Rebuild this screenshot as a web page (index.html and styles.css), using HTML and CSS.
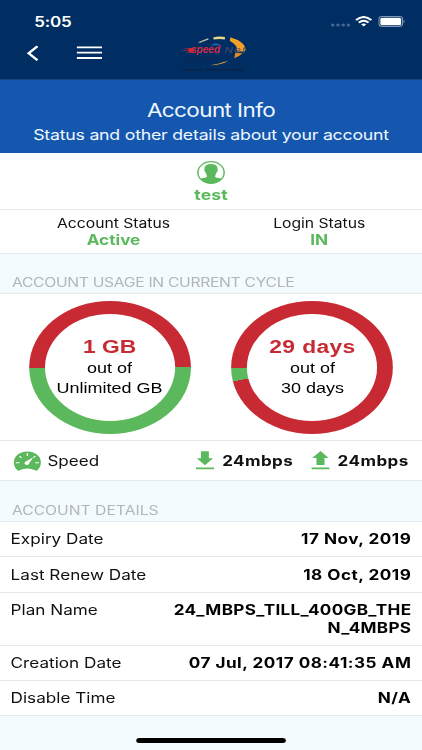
FILE: index.html
```html
<!DOCTYPE html>
<html lang="en">
<head>
<meta charset="utf-8">
<title>Account Info</title>
<link rel="stylesheet" href="styles.css">
</head>
<body>
<div class="screen">
  <header class="top">
    <div class="statusbar">
      <span class="time">5:05</span>
      <span class="signals">
        <svg width="16" height="4" viewBox="0 0 16 4" fill="#466791"><circle cx="1.6" cy="2" r="1.5"/><circle cx="5.9" cy="2" r="1.5"/><circle cx="10.2" cy="2" r="1.5"/><circle cx="14.5" cy="2" r="1.5"/></svg>
        <svg class="wifi" width="14" height="11" viewBox="0 0 14 11" fill="none" stroke="#fff" stroke-width="2"><path d="M.7 4.1Q7-2 13.3 4.1"/><path d="M3 6.6Q7 2.8 11 6.6"/><path d="M7 10.5 4.9 8.3Q7 6.5 9.1 8.3Z" fill="#fff" stroke="none"/></svg>
        <svg class="battery" width="23" height="11" viewBox="0 0 23 11"><rect x=".5" y=".5" width="19.5" height="9.9" rx="2.6" fill="none" stroke="#7e96b4"/><rect x="1.7" y="1.7" width="17.1" height="7.5" rx="1.5" fill="#fff"/><path d="M21 3.8q1.5 1.7 0 3.4z" fill="#9bafc7"/></svg>
      </span>
    </div>
    <nav class="nav">
      <svg class="back" width="10" height="17" viewBox="0 0 10 17" fill="none" stroke="#fff" stroke-width="2.2"><path d="M8.8 1.2 1.6 8.2 8.8 15.2"/></svg>
      <svg class="menu" width="21" height="14" viewBox="0 0 21 14" fill="none" stroke="#fff" stroke-width="1.8"><path d="M0 1.4H21M0 6.7H21M0 12H21"/></svg>
      <svg class="logo" width="56" height="40" viewBox="0 0 56 40">
        <path d="M12.7 6.2 21 2.2 21.6 3.4 14.5 6.8z" fill="#bcc69b"/>
        <path d="M25.3 1.4Q30 -.1 35 1L34.8 3.4Q30 2.4 25.6 3.6z" fill="#e8d98a"/>
        <path d="M39.3 1.2Q51 5.5 51.9 12.5Q52 14.5 51 15.5L45 15.5Q45.5 9 39 5z" fill="#f3a027"/>
        <path d="M43.5 17 49.5 17.3Q47.5 19.8 42.5 22.3z" fill="#e78b25"/>
        <path d="M37.5 25Q32.5 29 22.5 29.3Q31 27.8 33 26.2z" fill="#f0a735"/>
        <path d="M23.5 9.5q4-4.5 8 0z" fill="#1766a6"/>
        <path d="M1.5 12.5h9M0 14.5h9M3 16.5h7" stroke="#a82b43" stroke-width=".8" opacity=".7"/>
        <circle cx="7" cy="14" r="2.3" fill="#d92430"/>
        <text class="logo-speed" x="7" y="17" textLength="24" lengthAdjust="spacingAndGlyphs">speed</text>
        <text class="logo-net" x="34.5" y="17">Net</text>
        <path d="M3 21.5H29" stroke="#14274b" stroke-width="1.2" stroke-dasharray="3 .5"/>
        <path d="M2 24H27" stroke="#06284f" stroke-width="1"/>
        <text class="logo-tag" x=".5" y="34.8" textLength="50" lengthAdjust="spacingAndGlyphs">Connects • Forever • Reliable</text>
      </svg>
    </nav>
  </header>

  <section class="hero">
    <h1>Account Info</h1>
    <p>Status and other details about your account</p>
  </section>

  <section class="user">
    <svg width="23" height="23" viewBox="0 0 23 23"><circle cx="11.5" cy="11.5" r="10.8" fill="none" stroke="#5cb85c" stroke-width="1.2"/><path d="M11.5 3Q17 3 16.9 8Q17.3 8.7 16.8 10.1Q16.5 11.3 15.9 11.7L15 14.4Q14.3 16.3 16.7 16.8Q19.4 17.2 20.3 18Q17 22.2 11.5 22.2Q6 22.2 2.7 18Q3.6 17.2 6.3 16.8Q8.7 16.3 8 14.4L7.1 11.7Q6.5 11.3 6.2 10.1Q5.7 8.7 6.1 8Q6 3 11.5 3Z" fill="#5cb85c"/></svg>
    <strong>test</strong>
  </section>

  <section class="states">
    <div><span>Account Status</span><strong>Active</strong></div>
    <div><span>Login Status</span><strong>IN</strong></div>
  </section>

  <h2 class="usage-title">ACCOUNT USAGE IN CURRENT CYCLE</h2>
  <section class="rings">
    <div class="ring half"><div class="ring-text"><strong>1 GB</strong><span>out of</span><span>Unlimited GB</span></div></div>
    <div class="ring month"><div class="ring-text"><strong class="days">29 days</strong><span>out of</span><span>30 days</span></div></div>
  </section>
  <section class="speed">
    <svg class="gauge" width="23" height="20" viewBox="0 0 23 20"><path d="M11.5.4A11 11 0 0 1 22.6 11.4Q22.6 16 19.5 19.6Q19 20 18.3 19.5Q11.5 15.6 4.7 19.5Q4 20 3.5 19.6Q.4 16 .4 11.4A11 11 0 0 1 11.5.4Z" fill="#5cb85c"/><path d="M11.5 2.2V5.1M5 5 6.8 7M18 5 16.5 6.7M2 11.7H5M18 11.7H21" stroke="#fff" stroke-width="1.1"/><path d="M16.2 6.6 12.9 12.4A1.9 1.9 0 1 1 10.5 10.2Z" fill="#fff"/></svg>
    <span class="speed-label">Speed</span>
    <svg class="down" width="15" height="19" viewBox="0 0 15 19" fill="#5cb85c"><path d="M4.2.2H10.7V7.2H14.2L7.5 14.2.8 7.2H4.2zM0 16.4H15V18.3H0z"/></svg>
    <strong>24mbps</strong>
    <svg class="up" width="15" height="19" viewBox="0 0 15 19" fill="#5cb85c"><path d="M7.5 0 14.2 7H10.8V14H4.2V7H.8zM0 16.4H15V18.3H0z"/></svg>
    <strong>24mbps</strong>
  </section>

  <h2 class="details-title">ACCOUNT DETAILS</h2>
  <dl class="details">
    <div><dt>Expiry Date</dt><dd>17 Nov, 2019</dd></div>
    <div><dt>Last Renew Date</dt><dd>18 Oct, 2019</dd></div>
    <div class="plan"><dt>Plan Name</dt><dd>24_MBPS_TILL_400GB_THE<br>N_4MBPS</dd></div>
    <div><dt>Creation Date</dt><dd>07 Jul, 2017 08:41:35 AM</dd></div>
    <div><dt>Disable Time</dt><dd>N/A</dd></div>
  </dl>
  <div class="home"></div>
</div>
</body>
</html>
```
FILE: styles.css
```css
* { box-sizing: border-box; }
html, body { margin: 0; width: 422px; height: 750px; overflow: hidden; }
body { font-family: Inter, "Liberation Sans", sans-serif; background: #f3fbff; color: #111; }
/* The whole screen is wider than its natural proportions. */
.screen { width: 347px; height: 750px; transform: scaleX(1.2163); transform-origin: 0 0; display: flex; flex-direction: column; }
svg { display: block; flex: none; }
h1, h2, p, dl, dd, dt { margin: 0; font-weight: 400; }
.top { height: 80px; background: #002d62; border-bottom: 1px solid #174580; flex: none; }
.statusbar { height: 32px; padding: 12px 12.8px 0 28.2px; display: flex; justify-content: space-between; color: #fff; }
.time { font-size: 14px; line-height: 19px; font-weight: 600; letter-spacing: -.2px; }
.signals { display: flex; padding-top: 4px; }
.signals svg:first-child { margin-top: 7px; }
.wifi { margin-left: 4.5px; }
.battery { margin-left: 5px; }
.nav { height: 47px; display: flex; padding-left: 22px; }
.back { margin-top: 13px; }
.menu { margin: 14px 0 0 31.3px; }
.logo { margin: 4px 0 0 66px; overflow: visible; }
.logo-speed { font: italic 700 10px "Liberation Sans", sans-serif; fill: #d52a43; }
.logo-net { font: italic 400 9.5px "Liberation Sans", sans-serif; fill: #4b526e; letter-spacing: 1.2px; }
.logo-tag { font: 700 3.6px "Liberation Sans", sans-serif; fill: #111e3a; }
.hero { height: 73px; flex: none; padding-top: 18px; background: #1557ae; color: #eef8ff; text-align: center; }
.hero h1 { font-size: 18.5px; line-height: 24px; letter-spacing: -.5px; }
.hero p { font-size: 14.6px; line-height: 20px; margin-top: 3px; letter-spacing: -.2px; }
.user { height: 57px; flex: none; background: #fff; border-bottom: 1px solid #e6e9ec; display: flex; flex-direction: column; align-items: center; padding-top: 8px; color: #5cb85c; }
.user strong { font-size: 14.6px; line-height: 18px; margin-top: 2px; }
.states { height: 44px; flex: none; display: grid; grid-template-columns: 1fr 1fr; padding: 4.5px 0 0 8.8px; background: #fff; border-bottom: 1px solid #e6e9ec; text-align: center; }
.states div { display: flex; flex-direction: column; }
.states span { font-size: 12.9px; line-height: 17px; }
.states strong { font-size: 14.1px; line-height: 17px; margin-top: -1px; color: #5cb85c; }
h2 { flex: none; padding-left: 9.8px; border-bottom: 1px solid #e6e9ec; font-size: 12.9px; color: #b0b6ba; line-height: 18px; }
.usage-title { height: 40px; padding-top: 20px; letter-spacing: -.25px; }
.rings { height: 147px; flex: none; display: flex; justify-content: space-between; padding: 7px 23.6px 0 23.6px; background: #fff; border-bottom: 1px solid #e6e9ec; }
.ring { width: 133px; height: 133px; border-radius: 50%; padding: 13px; }
.half { background: conic-gradient(from -90deg, #c82a34 0 180deg, #5cb85c 180deg); }
.month { background: conic-gradient(from -102deg, #5cb85c 0 12deg, #c82a34 12deg); }
.ring-text { height: 107px; border-radius: 50%; background: #fff; display: flex; flex-direction: column; align-items: center; padding-top: 21px; font-family: "Liberation Sans", sans-serif; color: #000; }
.ring-text strong { font-size: 18.8px; line-height: 24px; color: #c82a34; }
.ring-text .days { letter-spacing: .3px; }
.ring-text span { font-size: 14.8px; line-height: 19.6px; white-space: nowrap; }
.speed { height: 40px; flex: none; background: #fff; border-bottom: 1px solid #e6e9ec; display: flex; padding: 10px 11px 0 11px; font-size: 14px; line-height: 20px; }
.speed strong { letter-spacing: .35px; }
.speed-label { margin-left: 5px; margin-right: auto; }
.down, .up { margin-right: 6.2px; }
.up { margin-left: 15.3px; }
.details-title { height: 41px; padding-top: 21px; }
.details div { height: 35.3px; padding: 8.4px 8.8px 0 8.7px; display: flex; justify-content: space-between; background: #fff; border-bottom: 1px solid #e6e9ec; font-size: 14.1px; line-height: 18px; }
.details dd { font-weight: 700; text-align: right; color: #000; letter-spacing: .4px; }
.details .plan { height: 53px; }
.details .plan dd { letter-spacing: .24px; }
.home { width: 123.5px; height: 5px; border-radius: 3px; background: #000; margin: auto auto 7.5px; }
```
